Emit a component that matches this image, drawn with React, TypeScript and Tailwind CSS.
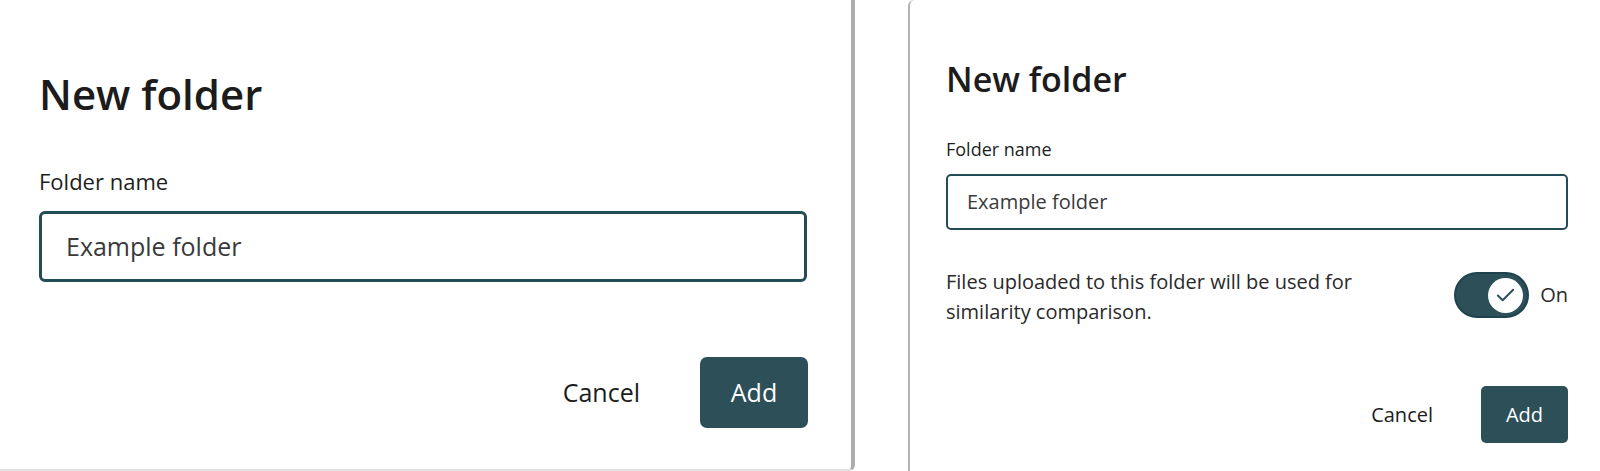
import { Check } from 'lucide-react';

const font = "font-['Open_Sans','Liberation_Sans',sans-serif]";

export default function App() {
  return (
    <div className={`${font} w-[1600px] h-[471px] bg-white flex overflow-hidden`}>
      {/* larger dialog */}
      <div className="w-[855px] h-[471px] bg-white border-r-[4px] border-r-[#adadad] border-b-[2px] border-b-[#e1e1e1] rounded-br-[6px] pl-[39px] flex flex-col">
        <h1 className="mt-[70px] text-[42px] leading-[48px] font-semibold text-[#1c1c1c]">New folder</h1>
        <label className="mt-[49px] text-[22px] leading-[28px] text-[#1e1e1e]">Folder name</label>
        <div className="mt-[16px] w-[768px] h-[71px] border-[3px] border-[#234c56] rounded-[6px] flex items-center pl-[24px]">
          <span className="text-[25px] text-[#3a3a3a]">Example folder</span>
        </div>
        <div className="mt-[75px] w-[769px] flex justify-end items-center gap-[60px]">
          <span className="text-[25px] text-[#1c1c1c]">Cancel</span>
          <div className="w-[108px] h-[71px] rounded-[7px] bg-[#2c4f58] flex items-center justify-center text-[25px] text-white">
            Add
          </div>
        </div>
      </div>

      <div className="w-[53px] shrink-0" />

      {/* compact dialog */}
      <div className="flex-1 h-[471px] bg-white border-l-[2px] border-l-[#b2b2b2] rounded-tl-[6px] pl-[36px] pr-[32px] flex flex-col">
        <h1 className="mt-[59px] text-[34px] leading-[40px] font-semibold text-[#1c1c1c]">New folder</h1>
        <label className="mt-[38px] text-[18px] leading-[24px] text-[#1e1e1e]">Folder name</label>
        <div className="mt-[13px] w-full h-[56px] border-[2px] border-[#234c56] rounded-[5px] flex items-center pl-[19px]">
          <span className="text-[20px] text-[#3a3a3a]">Example folder</span>
        </div>
        <div className="mt-[37px] flex items-center justify-between">
          <p className="w-[440px] text-[20px] leading-[30px] text-[#2a2a2a]">
            Files uploaded to this folder will be used for similarity comparison.
          </p>
          <div className="flex items-center gap-[11px] -mt-[4px]">
            <div className="w-[75px] h-[46px] rounded-full bg-[#2c4f58] border-[2px] border-[#1f434c] flex items-center justify-end pr-[4px]">
              <div className="w-[35px] h-[35px] rounded-full bg-white flex items-center justify-center">
                <Check size={23} strokeWidth={2} className="text-[#2c4f58]" />
              </div>
            </div>
            <span className="text-[20px] text-[#2a2a2a]">On</span>
          </div>
        </div>
        <div className="mt-[59px] flex justify-end items-center gap-[48px]">
          <span className="text-[20px] text-[#1c1c1c]">Cancel</span>
          <div className="w-[87px] h-[57px] rounded-[5px] bg-[#2c4f58] flex items-center justify-center text-[20px] text-white">
            Add
          </div>
        </div>
      </div>
    </div>
  );
}
